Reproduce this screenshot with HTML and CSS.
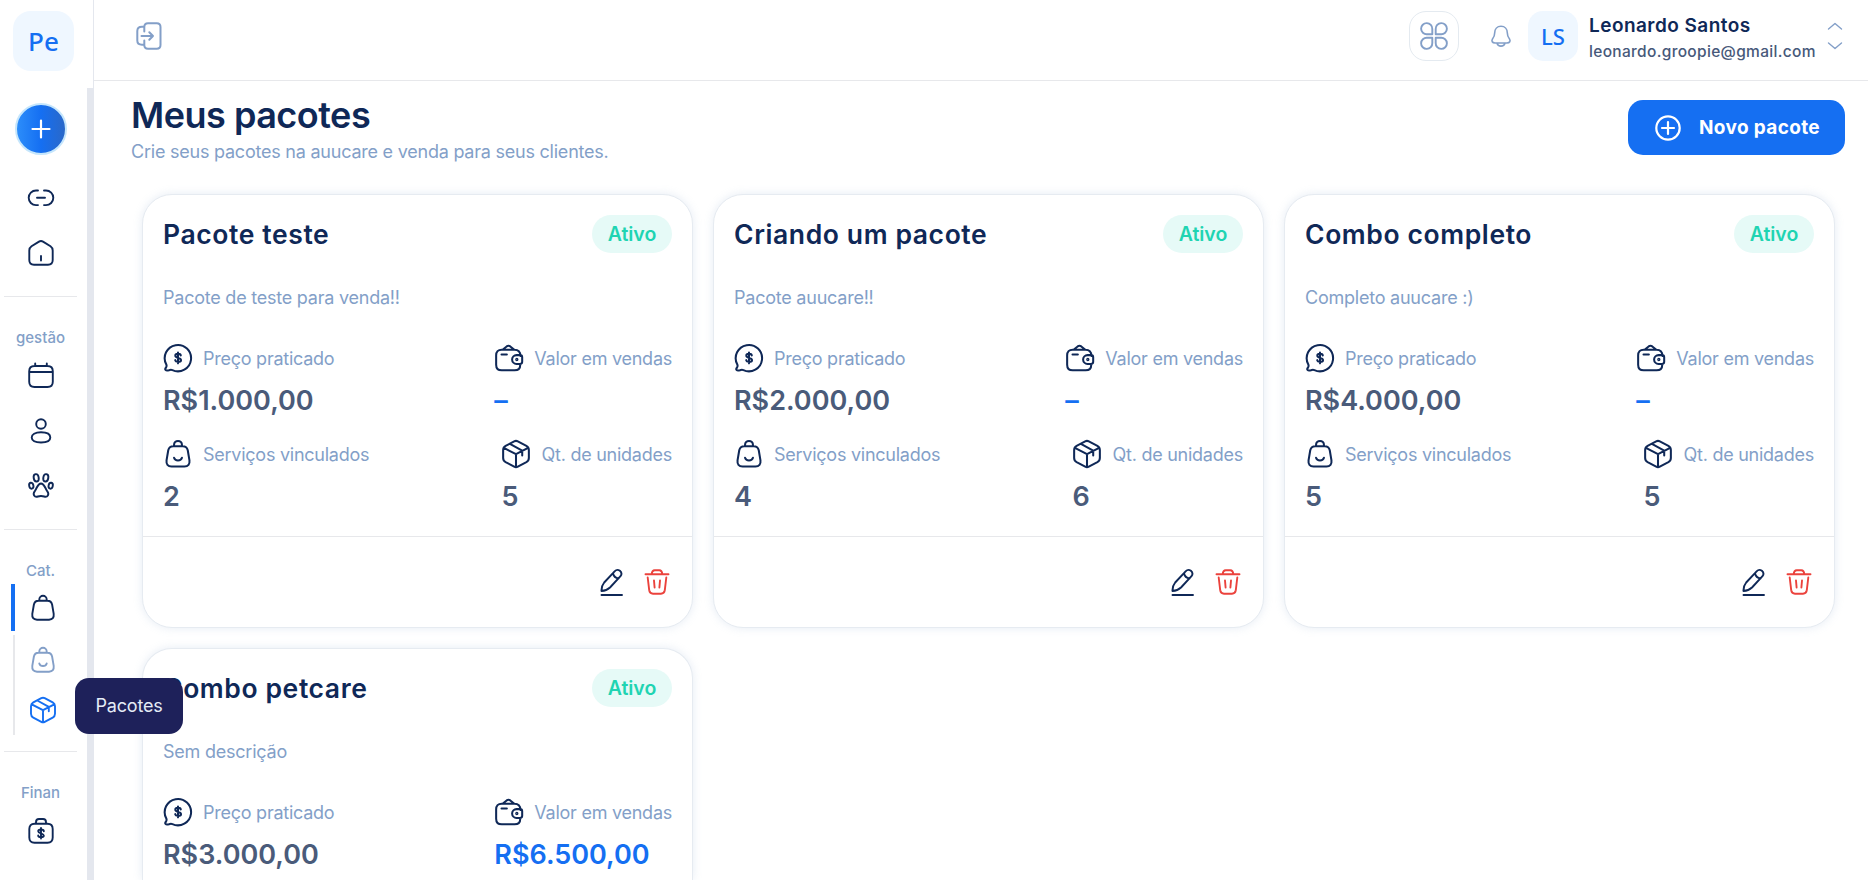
FILE: index.html
```html
<!DOCTYPE html>
<html lang="pt-br">
<head>
    <meta charset="utf-8">
    <title>Meus pacotes</title>
<link rel="stylesheet" href="styles.css">
</head>
<body>

<!-- icons -->
<svg class="sprite">
    <symbol id="i-link" viewBox="0 0 28 28"><path d="M11 6.500H9a7.300 7.300 0 0 0 0 14.600h2M17 6.500h2a7.300 7.300 0 0 1 0 14.600h-2M10 13.800h8"/></symbol>
    <symbol id="i-home" viewBox="0 0 28 28"><path d="M2.300 11.500Q2.300 8.800 4.500 7.300L12 2.600q2-1.200 4 0l7.500 4.700q2.200 1.500 2.200 4.200v9.500q0 4.700-4.700 4.700H7q-4.700 0-4.700-4.700zM14 17v4.500"/></symbol>
    <symbol id="i-calendar" viewBox="0 0 28 28"><path d="M8.200 1.500v2.500M19.800 1.500v2.500M2.200 10h23.600M7.500 4h13Q25.800 4 25.800 9.300v10.400Q25.800 25 20.500 25h-13Q2.200 25 2.200 19.700V9.300Q2.200 4 7.500 4z"/></symbol>
    <symbol id="i-user" viewBox="0 0 28 28"><circle cx="14" cy="7" r="4.800"/><path d="M4.700 20.500c0-3 3.300-5.300 9.300-5.300s9.300 2.300 9.300 5.300-3.300 5-9.300 5-9.300-2-9.300-5z"/></symbol>
    <symbol id="i-paw" viewBox="0 0 28 28"><ellipse cx="9.200" cy="5.800" rx="2.500" ry="3.700" transform="rotate(-10 9.200 5.800)"/><ellipse cx="18.800" cy="5.800" rx="2.500" ry="3.700" transform="rotate(10 18.800 5.800)"/><ellipse cx="4.300" cy="13.700" rx="2.100" ry="3" transform="rotate(-12 4.300 13.700)"/><ellipse cx="23.700" cy="13.700" rx="2.100" ry="3" transform="rotate(12 23.700 13.700)"/><path d="M14 11.500c-3.400 0-3.800 4.200-6.200 7.600-2.500 3.300-.3 6.400 3 5.400q3.200-1 6.400 0c3.300 1 5.500-2.100 3-5.400-2.400-3.400-2.800-7.600-6.200-7.600z"/></symbol>
    <symbol id="i-bag" viewBox="0 0 28 28"><path d="M10.300 6.800V5.500a3.700 3.700 0 0 1 7.400 0v1.300M9.500 6.800h9q3.700 0 4.600 3.700l1.600 9.400q.6 5.600-4.700 5.800H8q-5.300-.2-4.700-5.800l1.600-9.400q.9-3.700 4.600-3.700z"/></symbol>
    <symbol id="i-bag-smile" viewBox="0 0 28 28"><path d="M10.300 6.800V5.500a3.700 3.700 0 0 1 7.400 0v1.300M9.500 6.800h9q3.700 0 4.600 3.700l1.600 9.400q.6 5.600-4.700 5.800H8q-5.300-.2-4.700-5.800l1.600-9.400q.9-3.700 4.600-3.700zM10.300 17.500c1 3.400 6.400 3.400 7.400 0"/></symbol>
    <symbol id="i-box" viewBox="0 0 28 28"><path d="M12.300 2.200q1.700-.9 3.400 0l8 4.200q2.300 1.300 2.300 3.900v7.400q0 2.600-2.300 3.900l-8 4.200q-1.700.9-3.400 0l-8-4.200Q2 20.300 2 17.700v-7.400Q2 7.700 4.300 6.400zM2.700 8.300L14 14.200l11.300-5.900M14 14.200v12M8.300 4.500l11.500 6.300v4.500"/></symbol>
    <symbol id="i-case" viewBox="0 0 28 28"><path d="M9 6.800V5.200Q9 2 12 2h4q3 0 3 3.200v1.600M7.500 6.800h13Q25.700 6.800 25.700 12v8.500q0 5.200-5.200 5.200h-13Q2.300 25.700 2.300 20.500V12q0-5.200 5.200-5.200zM16.800 14.200c0-2.300-5.600-2.300-5.600 0s5.600 2 5.600 4.300-5.600 2.300-5.600 0M14 11v10.500"/></symbol>
    <symbol id="i-price" viewBox="0 0 28 28"><path d="M2.500 25.300q-.9-.8.200-2.200 1.100-1.600.3-3.300A12.300 12.300 0 1 1 8.800 25.300q-1.300-.6-3.300.1-2.200.7-3-.1zM16.600 11.600c-.4-2-5.100-2-5.100.2 0 2.400 5.300 1.700 5.300 4.200 0 2.100-5 2.100-5.400 0M14 8.800v10.200"/></symbol>
    <symbol id="i-wallet" viewBox="0 0 28 28"><path d="M24.500 12v-.5q0-5.200-5.300-5.200h-12Q2 6.300 2 11.500v8.700q0 5.300 5.200 5.300h12q5.300 0 5.300-5.300v-.4M8 6.300l3.800-3.100q1.700-1.200 3.400 0L19 6.300M7 10.800h5M21 11.300h3.300q2 0 2 2v4.200q0 2-2 2H21a4.100 4.100 0 0 1 0-8.200z"/><circle cx="21.300" cy="15.400" r=".6"/></symbol>
    <symbol id="i-edit" viewBox="0 0 28 28"><path d="M3.500 23q-.3-4.800 2.700-8.500L16.600 3.300q2.500-2.600 5.300-.5 2.800 2.500.6 5.400L12 19.500Q8.500 22.800 3.500 23zM15 5.200q1 4.600 5.500 5.300M3.500 27h20.500"/></symbol>
    <symbol id="i-trash" viewBox="0 0 28 28"><path d="M2.500 6.200h23M8.700 6q.3-3.800 3-3.800h4.600q2.700 0 3 3.800M4.700 9.500l1.500 12.700q.5 3.500 3.800 3.500h8q3.300 0 3.800-3.500l1.500-12.700M11 12.500l.6 7M17 12.500l-.6 7"/></symbol>
    <symbol id="i-door" viewBox="0 0 28 28"><path d="M8.300 9.500V5Q8.300 1.300 12 1.300h8.800Q24.500 1.300 24.500 5v18q0 3.700-3.700 3.700H12Q8.300 26.700 8.300 23v-4.500M8.300 4.800H6Q1.300 4.800 1.300 9v9.500Q1.300 22.700 6 22.700h2.300M5.500 14h11.500M13.300 10.300L17 14l-3.700 3.700"/></symbol>
    <symbol id="i-apps" viewBox="0 0 28 28"><path d="M12.300 12.300H7A5.600 5.600 0 1 1 12.300 7zM15.700 12.300H21A5.600 5.600 0 1 0 15.700 7zM12.300 15.700H7A5.600 5.600 0 1 0 12.300 21zM15.700 15.700H21A5.600 5.600 0 1 1 15.700 21z"/></symbol>
    <symbol id="i-bell" viewBox="0 0 24 24"><path d="M12 2.300c-4 0-6.300 3-6.300 6.500 0 3.200-.5 4.300-2.200 6.200-1.300 2.100-.2 4 2.500 4h12c2.700 0 3.800-1.900 2.500-4-1.700-1.900-2.200-3-2.200-6.200 0-3.500-2.300-6.500-6.300-6.500zM8 19c1 4.200 7 4.200 8 0"/></symbol>
    <symbol id="i-plus" viewBox="0 0 20 20"><path d="M10 1.500v17M1.500 10h17"/></symbol>
    <symbol id="i-plus-circle" viewBox="0 0 28 28"><circle cx="14" cy="14" r="11.700"/><path d="M14 8v12M8 14h12"/></symbol>
    <symbol id="i-up" viewBox="0 0 16 8"><path d="M1.500 7L8 1.500 14.500 7"/></symbol>
    <symbol id="i-down" viewBox="0 0 16 8"><path d="M1.500 1L8 6.500 14.500 1"/></symbol>
</svg>

<aside class="sidebar">
    <div class="brand"><div class="logo">Pe</div></div>
    <nav class="menu">
        <a class="add"><svg><use href="#i-plus"/></svg></a>
        <a class="item"><svg><use href="#i-link"/></svg></a>
        <a class="item"><svg><use href="#i-home"/></svg></a>
        <hr>
        <span class="group">gestão</span>
        <a class="item"><svg><use href="#i-calendar"/></svg></a>
        <a class="item"><svg><use href="#i-user"/></svg></a>
        <a class="item"><svg><use href="#i-paw"/></svg></a>
        <hr>
        <span class="group">Cat.</span>
        <a class="item open"><svg><use href="#i-bag"/></svg></a>
        <div class="submenu">
            <a class="subitem"><svg><use href="#i-bag-smile"/></svg></a>
            <a class="subitem current"><svg><use href="#i-box"/></svg><span class="tooltip">Pacotes</span></a>
        </div>
        <hr>
        <span class="group">Finan</span>
        <a class="item"><svg><use href="#i-case"/></svg></a>
    </nav>
</aside>

<div class="page">
    <header class="topbar">
        <svg class="door"><use href="#i-door"/></svg>
        <div class="account">
            <button class="apps"><svg><use href="#i-apps"/></svg></button>
            <svg class="bell"><use href="#i-bell"/></svg>
            <div class="avatar">LS</div>
            <div class="who">
                <div class="name">Leonardo Santos</div>
                <div class="email">leonardo.groopie@gmail.com</div>
            </div>
            <div class="arrows">
                <svg><use href="#i-up"/></svg>
                <svg><use href="#i-down"/></svg>
            </div>
        </div>
    </header>

    <main class="content">
        <div class="heading">
            <div>
                <h1>Meus pacotes</h1>
                <p>Crie seus pacotes na auucare e venda para seus clientes.</p>
            </div>
            <button class="new"><svg><use href="#i-plus-circle"/></svg><span>Novo pacote</span></button>
        </div>

        <div class="cards">
            <div class="card">
                <div class="card-body">
                    <div class="card-top"><h2>Pacote teste</h2><span class="badge">Ativo</span></div>
                    <p class="desc">Pacote de teste para venda!!</p>
                    <div class="stats">
                        <div class="stat"><div class="label"><svg><use href="#i-price"/></svg><span>Preço praticado</span></div><div class="value">R$1.000,00</div></div>
                        <div class="stat"><div class="label"><svg><use href="#i-wallet"/></svg><span>Valor em vendas</span></div><div class="value blue">–</div></div>
                    </div>
                    <div class="stats">
                        <div class="stat"><div class="label"><svg><use href="#i-bag-smile"/></svg><span>Serviços vinculados</span></div><div class="value">2</div></div>
                        <div class="stat"><div class="label"><svg><use href="#i-box"/></svg><span>Qt. de unidades</span></div><div class="value">5</div></div>
                    </div>
                </div>
                <div class="actions"><svg><use href="#i-edit"/></svg><svg class="red"><use href="#i-trash"/></svg></div>
            </div>

            <div class="card">
                <div class="card-body">
                    <div class="card-top"><h2>Criando um pacote</h2><span class="badge">Ativo</span></div>
                    <p class="desc">Pacote auucare!!</p>
                    <div class="stats">
                        <div class="stat"><div class="label"><svg><use href="#i-price"/></svg><span>Preço praticado</span></div><div class="value">R$2.000,00</div></div>
                        <div class="stat"><div class="label"><svg><use href="#i-wallet"/></svg><span>Valor em vendas</span></div><div class="value blue">–</div></div>
                    </div>
                    <div class="stats">
                        <div class="stat"><div class="label"><svg><use href="#i-bag-smile"/></svg><span>Serviços vinculados</span></div><div class="value">4</div></div>
                        <div class="stat"><div class="label"><svg><use href="#i-box"/></svg><span>Qt. de unidades</span></div><div class="value">6</div></div>
                    </div>
                </div>
                <div class="actions"><svg><use href="#i-edit"/></svg><svg class="red"><use href="#i-trash"/></svg></div>
            </div>

            <div class="card">
                <div class="card-body">
                    <div class="card-top"><h2>Combo completo</h2><span class="badge">Ativo</span></div>
                    <p class="desc">Completo auucare :)</p>
                    <div class="stats">
                        <div class="stat"><div class="label"><svg><use href="#i-price"/></svg><span>Preço praticado</span></div><div class="value">R$4.000,00</div></div>
                        <div class="stat"><div class="label"><svg><use href="#i-wallet"/></svg><span>Valor em vendas</span></div><div class="value blue">–</div></div>
                    </div>
                    <div class="stats">
                        <div class="stat"><div class="label"><svg><use href="#i-bag-smile"/></svg><span>Serviços vinculados</span></div><div class="value">5</div></div>
                        <div class="stat"><div class="label"><svg><use href="#i-box"/></svg><span>Qt. de unidades</span></div><div class="value">5</div></div>
                    </div>
                </div>
                <div class="actions"><svg><use href="#i-edit"/></svg><svg class="red"><use href="#i-trash"/></svg></div>
            </div>

            <div class="card last">
                <div class="card-body">
                    <div class="card-top"><h2>Combo petcare</h2><span class="badge">Ativo</span></div>
                    <p class="desc">Sem descrição</p>
                    <div class="stats">
                        <div class="stat"><div class="label"><svg><use href="#i-price"/></svg><span>Preço praticado</span></div><div class="value">R$3.000,00</div></div>
                        <div class="stat"><div class="label"><svg><use href="#i-wallet"/></svg><span>Valor em vendas</span></div><div class="value blue">R$6.500,00</div></div>
                    </div>
                </div>
            </div>
        </div>
    </main>
</div>

</body>
</html>
```

FILE: styles.css
```css
* {
	box-sizing: border-box;
}

body {
	margin: 0;
	height: 880px;
	display: flex;
	overflow: hidden;
	background-color: #FFFFFF;
	color: #0F2857;
	font-family: Inter, sans-serif;
}

h1, h2, p {
	margin: 0;
}

button {
	font-family: inherit;
	padding: 0;
}

svg {
	display: block;
	flex: none;
	width: 28px;
	height: 28px;
	fill: none;
	stroke: currentColor;
	stroke-width: 1.9;
	stroke-linecap: round;
	stroke-linejoin: round;
}

.sprite {
	position: absolute;
	width: 0;
	height: 0;
}

/* sidebar */
.sidebar {
	width: 94px;
	flex: none;
	height: 880px;
	border-right: 1px solid #E4E7EE;
}

.brand {
	height: 88px;
	padding: 11px 0 0 13px;
}

.logo, .avatar {
	display: flex;
	align-items: center;
	justify-content: center;
	background-color: #EFF7FF;
	color: #156FF2;
	font-family: "Noto Sans", sans-serif;
	font-weight: 500;
}

.logo {
	width: 61px;
	height: 60px;
	border-radius: 18px;
	font-size: 26px;
}

.menu {
	height: 792px;
	border-right: 6px solid #E4E7EE;
	padding: 15px 6px 0 0;
	display: flex;
	flex-direction: column;
	align-items: center;
}

.add {
	width: 52px;
	height: 52px;
	flex: none;
	border: 2px solid #C5E6FC;
	border-radius: 50%;
	background: linear-gradient(90deg, #2C8DFA, #156FF2 50%, #2A68C8);
	color: #FFFFFF;
	display: flex;
	align-items: center;
	justify-content: center;
	margin-bottom: 15px;
}

.add svg {
	width: 20px;
	height: 20px;
	stroke-width: 2.2;
}

.item {
	height: 55px;
	flex: none;
	display: flex;
	align-items: center;
}

.menu hr {
	width: 73px;
	flex: none;
	margin: 16px 0 30px;
	border: 0;
	border-top: 1px solid #E7E8EB;
}

.group {
	height: 21px;
	flex: none;
	line-height: 21px;
	font-size: 15px;
	font-weight: 500;
	color: #839FC8;
}

.open {
	width: 70px;
	height: 47px;
	margin: 3px 0 4px 11px;
	padding-left: 14px;
	border-left: 4px solid #156FF2;
	align-self: flex-start;
}

.submenu {
	width: 64px;
	flex: none;
	height: 100px;
	align-self: flex-start;
	margin-left: 13px;
	border-left: 2px solid #E7E8EB;
	padding-left: 14px;
}

.subitem {
	position: relative;
	height: 50px;
	display: flex;
	align-items: center;
	color: #839FC8;
}

.current {
	color: #156FF2;
}

.tooltip {
	position: absolute;
	left: 46px;
	top: -7px;
	z-index: 10;
	width: 108px;
	height: 56px;
	line-height: 56px;
	border-radius: 14px;
	background-color: #1E215A;
	color: #E4ECF6;
	font-size: 18px;
	letter-spacing: -.2px;
	text-align: center;
}

/* top bar */
.page {
	flex: 1;
	min-width: 0;
	height: 880px;
	overflow: hidden;
}

.topbar {
	height: 81px;
	border-bottom: 1px solid #E7E8EB;
	padding: 0 25px 0 42px;
	display: flex;
	justify-content: space-between;
	align-items: flex-start;
	color: #839FC8;
}

.door {
	margin-top: 22px;
	stroke-width: 2;
}

.account {
	display: flex;
	padding-top: 11px;
}

.apps {
	width: 50px;
	height: 50px;
	border: 1px solid #E4EAF0;
	border-radius: 17px;
	background-color: #FFFFFF;
	color: #839FC8;
	display: flex;
	align-items: center;
	justify-content: center;
}

.bell {
	width: 24px;
	height: 24px;
	margin: 13px 15px 0 30px;
	stroke-width: 1.6;
}

.avatar {
	width: 50px;
	height: 50px;
	border-radius: 15px;
	font-size: 22px;
}

.who {
	width: 248px;
	padding-left: 11px;
	white-space: nowrap;
}

.name {
	height: 26px;
	line-height: 29px;
	font-size: 19px;
	font-weight: 600;
	letter-spacing: .45px;
	color: #0F2857;
}

.email {
	line-height: 29px;
	font-size: 15.5px;
	letter-spacing: .32px;
	color: #47597A;
	font-weight: 500;
}

.arrows {
	padding-top: 11px;
}

.arrows svg {
	width: 16px;
	height: 8px;
	margin: 0 0 12px 1px;
	stroke-width: 1.4;
}

/* content */
.content {
	padding: 19px 23px 0 37px;
}

.heading {
	display: flex;
	justify-content: space-between;
	height: 94px;
}

h1 {
	font-size: 36px;
	line-height: 30px;
	font-weight: 600;
	letter-spacing: -.5px;
}

.heading p {
	margin-top: 10px;
	font-size: 18px;
	line-height: 24px;
	letter-spacing: -.23px;
	color: #839FC8;
}

.new {
	width: 217px;
	height: 55px;
	border: 0;
	border-radius: 15px;
	background-color: #156FF2;
	color: #FFFFFF;
	font-size: 19px;
	font-weight: 700;
	letter-spacing: .35px;
	display: flex;
	align-items: center;
	padding-left: 26px;
	gap: 17px;
	white-space: nowrap;
}

.new svg {
	stroke-width: 2.2;
}

.cards {
	display: grid;
	grid-template-columns: repeat(3, 551px);
	grid-auto-rows: 434px;
	gap: 20px;
	padding-left: 11px;
}

.card {
	border: 1px solid #E6EBF1;
	border-radius: 30px;
	box-shadow: 0 0 10px rgba(131, 159, 200, .2);
	background-color: #FFFFFF;
}

.card-body {
	height: 342px;
	padding: 20px 20px 0;
	border-bottom: 1px solid #E7E8EB;
}

.card-top {
	display: flex;
	justify-content: space-between;
	height: 69px;
}

h2 {
	font-size: 26.5px;
	line-height: 38px;
	font-weight: 600;
	letter-spacing: .6px;
}

.badge {
	width: 80px;
	height: 38px;
	line-height: 39px;
	border-radius: 19px;
	background-color: #E6FAF7;
	color: #1FD4B2;
	font-size: 19.5px;
	font-weight: 600;
	text-align: center;
}

.desc {
	height: 60px;
	line-height: 28px;
	font-size: 18px;
	letter-spacing: -.23px;
	color: #839FC8;
}

.stats {
	display: flex;
	justify-content: space-between;
	height: 96px;
}

.label {
	display: flex;
	align-items: center;
	gap: 10px;
	height: 28px;
	font-size: 18px;
	letter-spacing: -.25px;
	color: #839FC8;
	white-space: nowrap;
}

.label svg {
	width: 30px;
	height: 30px;
	color: #0F2857;
}

.value {
	margin-top: 11px;
	font-size: 27px;
	line-height: 36px;
	font-weight: 600;
	color: #4A5B7A;
}

.blue {
	color: #156FF2;
}

.actions {
	display: flex;
	justify-content: flex-end;
	gap: 17px;
	padding: 31px 21px 0;
}

.red {
	color: #EB423C;
}

/* the last row is cut by the window */
.last, .last .card-body {
	height: 232px;
	border-bottom: 0;
	border-bottom-left-radius: 0;
	border-bottom-right-radius: 0;
}
```
